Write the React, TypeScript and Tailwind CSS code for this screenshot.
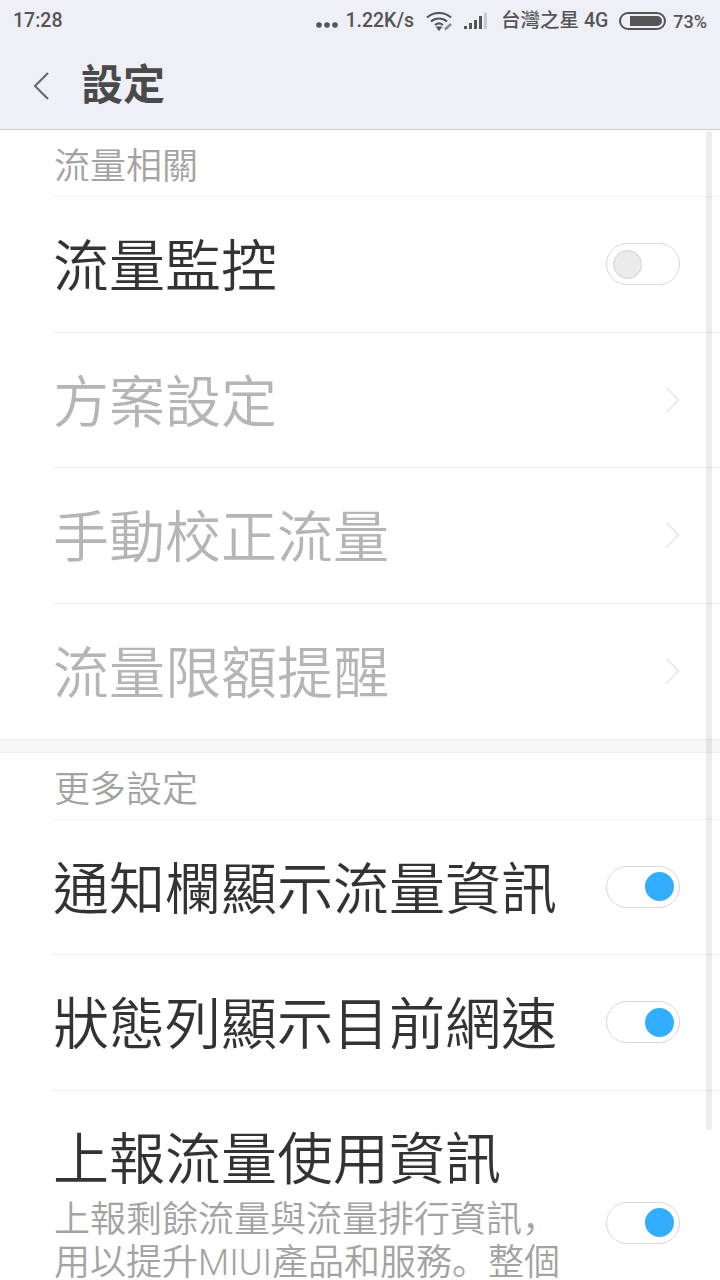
const cjk = "font-['Roboto','Noto_Sans_CJK_TC',sans-serif]";
const sc = "font-['Noto_Sans_CJK_SC',sans-serif] leading-none";

function Toggle({ on }: { on?: boolean }) {
  return (
    <div className={`w-[74px] h-[42px] rounded-full border border-[#d8d8d8] bg-white flex items-center px-[5.5px] shrink-0 ${on ? "justify-end" : "justify-start"}`}>
      <div className={`w-[29px] h-[29px] rounded-full ${on ? "bg-[#33aeff]" : "bg-[#ebebeb] border border-[#d2d2d2]"}`} />
    </div>
  );
}

function Chevron() {
  return (
    <svg width="15" height="28" viewBox="0 0 15 28" fill="none" className="shrink-0">
      <path d="M1.5 1.5 L13.5 14 L1.5 26.5" stroke="#e6e6e6" strokeWidth="1.6" />
    </svg>
  );
}

function Row({ label, right, dim }: { label: string; right: React.ReactNode; dim?: boolean }) {
  return (
    <div className="h-[135.5px] ml-[53px] pr-[40px] border-b border-[#eeeeee] flex items-center justify-between">
      <span className={`text-[56px] leading-none font-[350] mt-[6px] ${dim ? "text-[#b5b5b5]" : "text-[#333333]"}`}>{label}</span>
      {right}
    </div>
  );
}

function SectionHead({ label }: { label: string }) {
  return (
    <div className="h-[67px] ml-[53px] border-b border-[#f0f0f0] flex items-center">
      <span className="text-[36px] leading-none font-[350] text-[#a3a3a3] ml-[1px] mt-[8px]">{label}</span>
    </div>
  );
}

function StatusBar() {
  return (
    <div className="h-[42px] flex items-center justify-between pl-[13px] pr-[13px] text-[#555555] text-[19.5px] font-medium">
      <span>17:28</span>
      <div className="flex items-center">
        <svg width="22" height="6" viewBox="0 0 22 6" className="mt-[7px] mr-[7px]" fill="#555555">
          <circle cx="3" cy="3" r="2.8" /><circle cx="11" cy="3" r="2.8" /><circle cx="19" cy="3" r="2.8" />
        </svg>
        <span>1.22K/s</span>
        <svg width="28" height="20" viewBox="0 0 28 20" fill="none" stroke="#555555" strokeWidth="2" className="ml-[12px]">
          <path d="M1 6.5 C7.5 0.5 18.5 0.5 25 6.5" />
          <path d="M5 10.5 C9.5 6.5 16.5 6.5 21 10.5" />
          <path d="M9 14 C11.5 12 14.5 12 17 14" />
          <path d="M11.5 16.5 L13 18.5 L14.5 16.5 Z" fill="#555555" />
          <path d="M19 18.5 L25 13" stroke="#888888" strokeWidth="2.5" />
        </svg>
        <svg width="24" height="18" viewBox="0 0 24 18" className="ml-[10px]">
          <rect x="0" y="14" width="3" height="3" fill="#555555" />
          <rect x="5" y="11" width="3" height="6" fill="#555555" />
          <rect x="10" y="8" width="3" height="9" fill="#555555" />
          <rect x="15" y="4" width="3" height="13" fill="#555555" />
          <rect x="20" y="1" width="3" height="16" fill="#c9c9cf" />
        </svg>
        <span className="ml-[13px]">台灣之星 4G</span>
        <div className="ml-[11px] w-[47px] h-[18px] rounded-full border-2 border-[#555555] flex items-center justify-end pr-[2px]">
          <div className="w-[32px] h-[10px] rounded-r-full bg-[#555555]" />
        </div>
        <span className="ml-[7px] text-[18px]">73%</span>
      </div>
    </div>
  );
}

export default function App() {
  return (
    <div className={`relative w-[720px] h-[1280px] overflow-hidden bg-white ${cjk}`}>
      <div className="bg-[#eeeff7] border-b border-[#d0d0d4] h-[130px]">
        <StatusBar />
        <div className="h-[87px] flex items-center pl-[33px]">
          <svg width="16" height="28" viewBox="0 0 16 28" fill="none">
            <path d="M15 1 L2 14 L15 27" stroke="#666666" strokeWidth="2" />
          </svg>
          <span className="ml-[32px] text-[42px] leading-none font-bold text-[#4a4a4a]">設定</span>
        </div>
      </div>

      <SectionHead label="流量相關" />
      <Row label="流量監控" right={<Toggle />} />
      <Row dim label="方案設定" right={<Chevron />} />
      <Row dim label="手動校正流量" right={<Chevron />} />
      <div className="h-[135px] ml-[53px] pr-[40px] flex items-center justify-between">
        <span className="text-[56px] leading-none font-[350] mt-[6px] text-[#b5b5b5]">流量限額提醒</span>
        <Chevron />
      </div>

      <div className="h-[14px] bg-[#f6f6f6] border-y border-[#eeeeee]" />

      <SectionHead label="更多設定" />
      <Row label="通知欄顯示流量資訊" right={<Toggle on />} />
      <Row label="狀態列顯示目前網速" right={<Toggle on />} />

      <div className="ml-[53px] pr-[40px]">
        <div className="text-[56px] leading-none font-[350] text-[#333333] pt-[41px]">上報流量使用資訊</div>
        <div className="flex items-start justify-between mt-[10px]">
          <div className="text-[36px] leading-[43px] font-[350] text-[#a3a3a3] ml-[1px] whitespace-nowrap">
            <div className="h-[43px]">上報剩餘流量與流量排行資訊<span className={sc}>，</span></div>
            <div className="h-[43px]">用以提升MIUI產品和服務<span className={sc}>。</span>整個</div>
          </div>
          <div className="mt-[4px]"><Toggle on /></div>
        </div>
      </div>

      <div className="absolute left-[706px] top-[131px] w-[6px] h-[999px] rounded-full bg-[#000000]/[0.07]" />
    </div>
  );
}
